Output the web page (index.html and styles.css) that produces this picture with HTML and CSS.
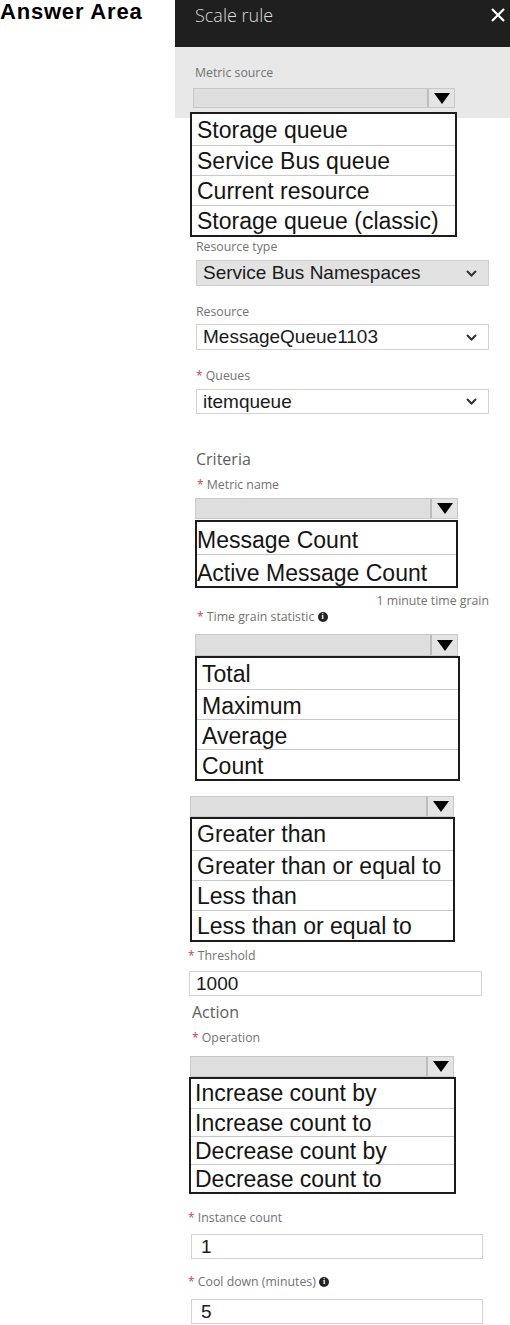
FILE: index.html
```html
<!DOCTYPE html>
<html>
<head>
<meta charset="utf-8">
<title>Scale rule</title>
<link rel="stylesheet" href="styles.css">
</head>
<body>
<div class="page">
  <div class="answer">Answer Area</div>
  <div class="panel">
    <div class="panel-head">
      <span class="title">Scale rule</span>
      <svg class="close" width="14" height="14" viewBox="0 0 14 14"><path d="M1 1 L13 13 M13 1 L1 13" stroke="#fff" stroke-width="2.2" fill="none"/></svg>
    </div>
    <div class="band">
      <div class="label lbl-src">Metric source</div>
      <div class="dd dd-src"><div class="dd-bar"></div><div class="dd-arrow"><svg width="16" height="11" viewBox="0 0 16 11"><polygon points="0,0 16,0 8,11" fill="#000"/></svg></div></div>
    </div>
    <ul class="list list-src">
      <li>Storage queue</li>
      <li>Service Bus queue</li>
      <li>Current resource</li>
      <li>Storage queue (classic)</li>
    </ul>

    <div class="label lbl-restype">Resource type</div>
    <div class="select select-gray sel-restype"><span>Service Bus Namespaces</span><svg class="chev" width="11" height="7" viewBox="0 0 11 7"><path d="M1 1 L5.5 5.5 L10 1" stroke="#333" stroke-width="2" fill="none"/></svg></div>

    <div class="label lbl-res">Resource</div>
    <div class="select sel-res"><span>MessageQueue1103</span><svg class="chev" width="11" height="7" viewBox="0 0 11 7"><path d="M1 1 L5.5 5.5 L10 1" stroke="#333" stroke-width="2" fill="none"/></svg></div>

    <div class="label lbl-queues"><span class="req">*</span> Queues</div>
    <div class="select sel-queues"><span>itemqueue</span><svg class="chev" width="11" height="7" viewBox="0 0 11 7"><path d="M1 1 L5.5 5.5 L10 1" stroke="#333" stroke-width="2" fill="none"/></svg></div>

    <div class="section criteria">Criteria</div>
    <div class="label lbl-metric"><span class="req">*</span> Metric name</div>
    <div class="dd dd-metric"><div class="dd-bar"></div><div class="dd-arrow"><svg width="16" height="11" viewBox="0 0 16 11"><polygon points="0,0 16,0 8,11" fill="#000"/></svg></div></div>
    <ul class="list list-metric">
      <li>Message Count</li>
      <li>Active Message Count</li>
    </ul>
    <div class="note">1 minute time grain</div>

    <div class="label lbl-grain"><span class="req">*</span> Time grain statistic <span class="info">i</span></div>
    <div class="dd dd-grain"><div class="dd-bar"></div><div class="dd-arrow"><svg width="16" height="11" viewBox="0 0 16 11"><polygon points="0,0 16,0 8,11" fill="#000"/></svg></div></div>
    <ul class="list list-grain">
      <li>Total</li>
      <li>Maximum</li>
      <li>Average</li>
      <li>Count</li>
    </ul>

    <div class="dd dd-op"><div class="dd-bar"></div><div class="dd-arrow"><svg width="16" height="11" viewBox="0 0 16 11"><polygon points="0,0 16,0 8,11" fill="#000"/></svg></div></div>
    <ul class="list list-op">
      <li>Greater than</li>
      <li>Greater than or equal to</li>
      <li>Less than</li>
      <li>Less than or equal to</li>
    </ul>

    <div class="label lbl-threshold"><span class="req">*</span> Threshold</div>
    <div class="input in-threshold">1000</div>

    <div class="section action">Action</div>
    <div class="label lbl-operation"><span class="req">*</span> Operation</div>
    <div class="dd dd-operation"><div class="dd-bar"></div><div class="dd-arrow"><svg width="16" height="11" viewBox="0 0 16 11"><polygon points="0,0 16,0 8,11" fill="#000"/></svg></div></div>
    <ul class="list list-operation">
      <li>Increase count by</li>
      <li>Increase count to</li>
      <li>Decrease count by</li>
      <li>Decrease count to</li>
    </ul>

    <div class="label lbl-instance"><span class="req">*</span> Instance count</div>
    <div class="input in-instance">1</div>

    <div class="label lbl-cool"><span class="req">*</span> Cool down (minutes) <span class="info">i</span></div>
    <div class="input in-cool">5</div>
  </div>
</div>
</body>
</html>
```

FILE: styles.css
```css
* { box-sizing: border-box; }

body {
  margin: 0;
  background: #fff;
  font-family: "Liberation Sans", Arial, sans-serif;
  color: #111;
}

.page {
  display: flex;
  width: 510px;
  height: 1325px;
  overflow: hidden;
}

.answer {
  width: 175px;
  flex: none;
  font-size: 22px;
  font-weight: bold;
  letter-spacing: 0.8px;
  line-height: 24px;
  color: #000;
}

.panel {
  width: 335px;
  flex: none;
  display: flex;
  flex-direction: column;
  align-items: flex-start;
}

.panel-head {
  width: 100%;
  height: 47px;
  background: #1f1f1f;
  display: flex;
  justify-content: space-between;
  align-items: flex-start;
  padding: 3px 5px 0 20px;
}

.title {
  font-family: "Open Sans", "Noto Sans", sans-serif;
  font-weight: 300;
  font-size: 18px;
  line-height: 24px;
  color: #dcdcdc;
}

.close { margin-top: 5px; }

.band {
  width: 100%;
  height: 71px;
  background: #e8e8e8;
  padding-top: 19px;
  display: flex;
  flex-direction: column;
  align-items: flex-start;
}

.label {
  font-family: "Open Sans", "Noto Sans", sans-serif;
  font-size: 12.3px;
  line-height: 14px;
  color: #727272;
  display: flex;
  align-items: center;
  white-space: pre;
}

.req { color: #d0404a; font-size: 12px; }

.info {
  display: inline-flex;
  align-items: center;
  justify-content: center;
  width: 10px;
  height: 10px;
  border-radius: 50%;
  background: #222;
  color: #fff;
  font-family: "Liberation Serif", serif;
  font-weight: bold;
  font-size: 8px;
  line-height: 10px;
}

.section {
  font-family: "Open Sans", "Noto Sans", sans-serif;
  font-size: 16px;
  line-height: 20px;
  color: #5e5e5e;
}

/* dropdown bar with arrow box */
.dd {
  display: flex;
  border: 1px solid #c9c9c9;
  background: #dedede;
}
.dd-bar { flex: 1; }
.dd-arrow {
  width: 27px;
  border-left: 2px solid #bdbdbd;
  background: #e4e4e4;
  display: flex;
  align-items: center;
  justify-content: center;
}

/* open option lists */
.list {
  list-style: none;
  margin: 0;
  padding: 0;
  border: 2px solid #1c1c1c;
  background: #fff;
  position: relative;
}
.list li {
  height: 30px;
  line-height: 30px;
  border-top: 1px solid #c9c9c9;
  font-size: 23px;
  color: #151515;
  white-space: nowrap;
  padding-left: 5px;
}
.list li:first-child { border-top: 0; }

/* selects */
.select {
  width: 293px;
  height: 26px;
  margin-left: 21px;
  border: 1px solid #d3d3d3;
  background: #fff;
  display: flex;
  align-items: center;
  justify-content: space-between;
  padding: 0 11px 0 6px;
  font-size: 19px;
  color: #1a1a1a;
}
.select-gray { background: #e2e2e2; border-color: #cfcfcf; }

.input {
  height: 25px;
  border: 1px solid #d3d3d3;
  background: #fff;
  font-size: 19px;
  line-height: 23px;
  color: #1a1a1a;
}

/* --- individual placements --- */
.lbl-src { margin-left: 20px; }
.dd-src { margin-left: 18px; margin-top: 8px; width: 262px; height: 20px; }
.list-src { margin-left: 15px; margin-top: -6px; width: 267px; }
.list-src li:first-child { height: 31px; line-height: 33px; }

.lbl-restype { margin-left: 21px; margin-top: 3px; }
.sel-restype { margin-top: 6px; }
.lbl-res { margin-left: 21px; margin-top: 19px; }
.sel-res { margin-top: 5px; }
.lbl-queues { margin-left: 21px; margin-top: 19px; }
.sel-queues { margin-top: 6px; height: 25px; }

.criteria { margin-left: 21px; margin-top: 35px; }
.lbl-metric { margin-left: 22px; margin-top: 9px; }
.dd-metric { margin-left: 20px; margin-top: 6px; width: 263px; height: 21px; }
.list-metric { margin-left: 20px; margin-top: 1px; width: 263px; }
.list-metric li { height: 32px; line-height: 36px; padding-left: 0; }

.note {
  align-self: flex-end;
  margin-right: 21px;
  margin-top: 6px;
  font-family: "Open Sans", "Noto Sans", sans-serif;
  font-size: 12.3px;
  line-height: 14px;
  color: #727272;
}

.lbl-grain { margin-left: 22px; margin-top: 2px; }
.dd-grain { margin-left: 20px; margin-top: 10px; width: 263px; height: 22px; }
.list-grain { margin-left: 20px; width: 265px; }
.list-grain li { line-height: 32px; }
.list-grain li:first-child { height: 31px; }

.dd-op { margin-left: 15px; margin-top: 15px; width: 264px; height: 21px; }
.list-op { margin-left: 15px; width: 265px; }
.list-op li { line-height: 31px; }
.list-op li:first-child { height: 31px; }

.lbl-threshold { margin-left: 13px; margin-top: 7px; }
.in-threshold { margin-left: 14px; margin-top: 8px; width: 293px; padding-left: 6px; }

.action { margin-left: 17px; margin-top: 6px; }
.lbl-operation { margin-left: 17px; margin-top: 9px; }
.dd-operation { margin-left: 15px; margin-top: 11px; width: 264px; height: 21px; }
.list-operation { margin-left: 14px; width: 267px; }
.list-operation li { height: 28px; line-height: 29px; font-size: 23px; padding-left: 4px; }
.list-operation li:first-child { height: 29px; }

.lbl-instance { margin-left: 13px; margin-top: 17px; }
.in-instance { margin-left: 16px; margin-top: 9px; width: 292px; padding-left: 9px; }
.lbl-cool { margin-left: 13px; margin-top: 16px; }
.in-cool { margin-left: 16px; margin-top: 10px; width: 292px; padding-left: 9px; }
```
